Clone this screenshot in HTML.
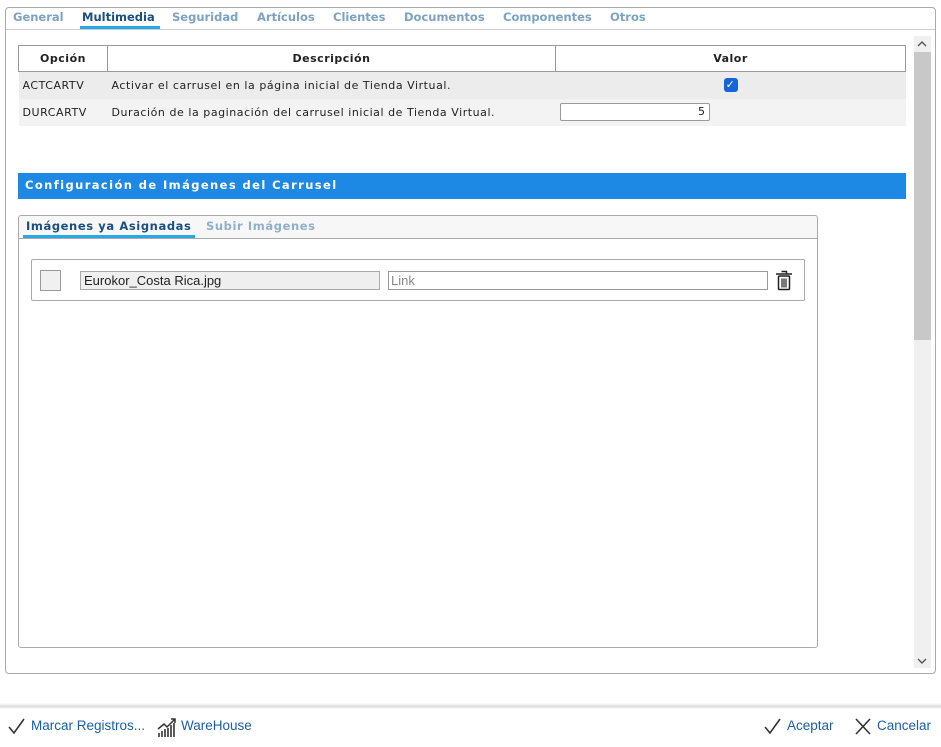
<!DOCTYPE html>
<html><head><meta charset="utf-8"><style>
*{box-sizing:border-box;margin:0;padding:0}
body{width:941px;height:747px;background:#fff;font-family:"DejaVu Sans","Liberation Sans",sans-serif;font-size:11px;color:#222;position:relative;overflow:hidden}
.abs{position:absolute}
.panel{left:5px;top:7px;width:931px;height:667px;border:1px solid #aaa;border-radius:4px}
.tabs{left:13px;top:10px;font-weight:bold;font-size:11.5px;color:#7aa3c4;white-space:nowrap}
.tabs span{position:absolute;top:0}
.sep{left:6px;top:29px;width:929px;height:1px;background:#ccc}
table{border-collapse:collapse;position:absolute;left:18px;top:45px;width:888px}
th{height:26px;border:1px solid #999;font-size:11px;letter-spacing:.5px}
td{height:27px;padding-left:4px;font-size:11px;letter-spacing:.55px}
.blue{left:18px;top:173px;width:888px;height:26px;background:#1e88e5;color:#fff;font-weight:bold;font-size:11.5px;letter-spacing:1.4px;padding:5px 7px}
.inner{left:18px;top:215px;width:800px;height:433px;border:1px solid #aaa;border-radius:3px}
.itabs{left:19px;top:216px;width:798px;height:23px;background:#f7f7f7;border-bottom:1px solid #aaa;border-radius:3px 3px 0 0}
.foot a{color:#1a5fa8;font-family:"Liberation Sans",sans-serif;font-size:13.5px;position:absolute;top:718px}
</style></head><body>
<div class="abs panel"></div>
<div class="abs tabs">
<span style="left:0">General</span>
<span style="left:69px;color:#1a4f80">Multimedia</span>
<span style="left:159px">Seguridad</span>
<span style="left:244px">Artículos</span>
<span style="left:320px">Clientes</span>
<span style="left:391px">Documentos</span>
<span style="left:490px">Componentes</span>
<span style="left:597px">Otros</span>
</div>
<div class="abs" style="left:80px;top:26px;width:80px;height:3px;background:#29a8e8"></div>
<div class="abs sep"></div>
<div class="abs" style="left:914px;top:36px;width:17px;height:632px;background:#f0f0f0"></div>
<div class="abs" style="left:914px;top:52px;width:17px;height:288px;background:#c8c8c8"></div>
<svg class="abs" style="left:917px;top:40px" width="10" height="8"><path d="M1 6l4-4 4 4" stroke="#555" stroke-width="1.4" fill="none"/></svg>
<svg class="abs" style="left:917px;top:657px" width="10" height="8"><path d="M1 2l4 4 4-4" stroke="#555" stroke-width="1.4" fill="none"/></svg>
<table>
<tr><th style="width:89px">Opción</th><th style="width:448px">Descripción</th><th>Valor</th></tr>
<tr style="background:#ececec"><td>ACTCARTV</td><td>Activar el carrusel en la página inicial de Tienda Virtual.</td><td style="text-align:center;padding:0"><span style="display:inline-block;width:14px;height:14px;background:#1565d8;border-radius:3px;color:#fff;font-size:11px;line-height:14px;font-weight:bold">✓</span></td></tr>
<tr style="background:#f3f3f3"><td>DURCARTV</td><td>Duración de la paginación del carrusel inicial de Tienda Virtual.</td><td style="padding-left:4px"><div style="width:150px;height:18px;border:1px solid #999;border-radius:2px;background:#fff;text-align:right;padding-right:3px;line-height:16px">5</div></td></tr>
</table>
<div class="abs blue">Configuración de Imágenes del Carrusel</div>
<div class="abs inner"></div>
<div class="abs itabs"></div>
<div class="abs" style="left:26px;top:219px;font-weight:bold;font-size:11.5px;letter-spacing:.6px;color:#1a4f80">Imágenes ya Asignadas</div>
<div class="abs" style="left:206px;top:219px;font-weight:bold;font-size:11.5px;letter-spacing:.6px;color:#8fb0cc">Subir Imágenes</div>
<div class="abs" style="left:23px;top:235px;width:172px;height:3px;background:#29a8e8"></div>
<div class="abs" style="left:31px;top:259px;width:774px;height:42px;border:1px solid #aaa;border-radius:2px"></div>
<div class="abs" style="left:40px;top:270px;width:21px;height:21px;border:1px solid #999;background:#f0f0f0"></div>
<div class="abs" style="left:80px;top:271px;width:300px;height:19px;border:1px solid #aaa;background:#efefef;font-family:'Liberation Sans',sans-serif;font-size:13px;padding-left:3px;line-height:17px">Eurokor_Costa Rica.jpg</div>
<div class="abs" style="left:388px;top:271px;width:380px;height:19px;border:1px solid #999;background:#fff;font-family:'Liberation Sans',sans-serif;font-size:13px;color:#888;padding-left:2px;line-height:17px">Link</div>
<svg class="abs" style="left:775px;top:270px" width="18" height="21" viewBox="0 0 18 21"><path d="M6.5 1.5h5v2M1 4h16" stroke="#222" stroke-width="1.5" fill="none"/><rect x="3.5" y="6" width="11" height="13.5" rx="1" stroke="#222" stroke-width="1.5" fill="none"/><path d="M7 8.5v9M9 8.5v9M11 8.5v9" stroke="#222" stroke-width="1.2"/></svg>
<div class="abs" style="left:0;top:703px;width:941px;height:6px;background:linear-gradient(#fff,#ddd 60%,#fff)"></div>
<div class="foot">
<svg class="abs" style="left:8px;top:718px" width="18" height="17"><path d="M1 9l5 6L16 1" stroke="#333" stroke-width="1.6" fill="none"/></svg>
<a style="left:31px">Marcar Registros...</a>
<svg class="abs" style="left:157px;top:716px" width="22" height="22"><path d="M2 21v-4M5 21v-6M8 21v-8M11 21v-9M14 21v-12M17 21v-14" stroke="#333" stroke-width="1.6"/><path d="M1 13l6-5 3 3 8-8M14 3h4v4" stroke="#333" stroke-width="1.5" fill="none"/></svg>
<a style="left:181px">WareHouse</a>
<svg class="abs" style="left:764px;top:718px" width="18" height="17"><path d="M1 9l5 6L16 1" stroke="#333" stroke-width="1.6" fill="none"/></svg>
<a style="left:787px">Aceptar</a>
<svg class="abs" style="left:854px;top:718px" width="18" height="17"><path d="M2 1l14 15M16 1L2 16" stroke="#333" stroke-width="1.6"/></svg>
<a style="left:877px">Cancelar</a>
</div>
</body></html>
